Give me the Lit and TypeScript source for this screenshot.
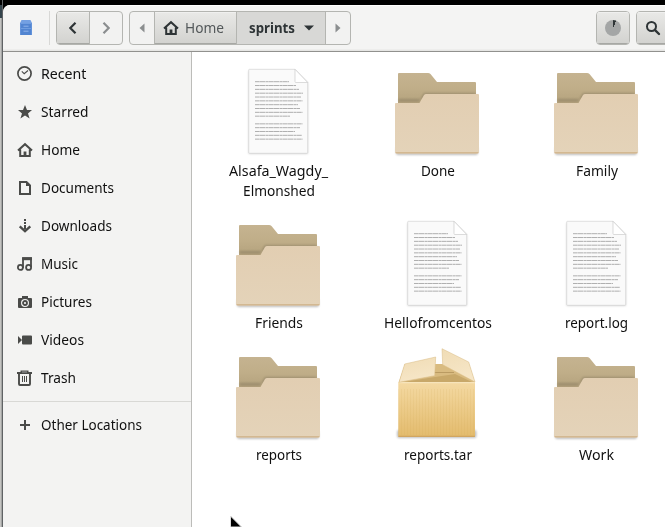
import { LitElement, html, css, svg } from "lit";
import { customElement, property } from "lit/decorators.js";

// Text label condensed horizontally so that it fills a given width.
@customElement("fit-label")
class FitLabel extends LitElement {
  @property() text = "";
  @property({ type: Number }) fit = 0;
  static styles = css`
    :host { display: block; white-space: nowrap; }
    span { display: inline-block; transform-origin: 0 50%; }
  `;
  updated() {
    const s = this.renderRoot.querySelector("span") as HTMLElement;
    s.style.transform = "none";
    const k = this.fit / s.getBoundingClientRect().width;
    s.style.transform = `scaleX(${k.toFixed(4)})`;
    this.style.width = this.fit + "px";
  }
  render() { return html`<span>${this.text}</span>`; }
}

const house = svg`<path d="M1 8.4 8 2.2 15 8.4M3.2 7.5V14H12.8V7.5" fill="none" stroke="currentColor" stroke-width="2"/><path d="M6.6 14V9.5H9.4V14Z" fill="currentColor"/>`;

const glyphs: Record<string, unknown> = {
  recent: svg`<circle cx="7.5" cy="7.5" r="6.6" fill="none" stroke="currentColor" stroke-width="1.7"/><path d="M4.8 5.4 7.2 7.7 11 4.5" fill="none" stroke="currentColor" stroke-width="1.1"/>`,
  star: svg`<path d="M8 1 10 6H15L11 9.4 12.6 14.6 8 11.5 3.4 14.6 5 9.4 1 6H6Z" fill="currentColor"/>`,
  home: house,
  doc: svg`<path d="M3 2H9.5L13 5.5V14H3Z" fill="none" stroke="currentColor" stroke-width="2"/><path d="M9 2V6H13Z" fill="currentColor"/>`,
  down: svg`<path d="M7 1H9V3H7ZM7 4H9V6H7ZM7 7H9V11H7Z" fill="currentColor"/><path d="M2.7 8.3 8 13.2 13.3 8.3" fill="none" stroke="currentColor" stroke-width="2.3"/>`,
  music: svg`<path d="M6 12V2.2H14V11" fill="none" stroke="currentColor" stroke-width="1.8"/><path d="M5.2 1.3H15V4.2H5.2Z" fill="currentColor"/><circle cx="3.4" cy="11.4" r="2.5" fill="none" stroke="currentColor" stroke-width="1.8"/><circle cx="11.6" cy="11.4" r="2.5" fill="none" stroke="currentColor" stroke-width="1.8"/>`,
  camera: svg`<path fill-rule="evenodd" d="M5 2H11V4H14Q15 4 15 5V13Q15 14 14 14H2Q1 14 1 13V5Q1 4 2 4H5ZM8 5A4 4 0 1 0 8 13A4 4 0 1 0 8 5Z" fill="currentColor"/><circle cx="8" cy="9" r="2" fill="none" stroke="currentColor" stroke-width="1.8"/>`,
  video: svg`<path d="M1 4 5 8 1 12ZM5 4.5Q5 3.5 6 3.5H14Q15 3.5 15 4.5V11.5Q15 12.5 14 12.5H6Q5 12.5 5 11.5Z" fill="currentColor"/>`,
  trash: svg`<path d="M0 2H3.5V0.5H11.5V2H15V4H0ZM5 1.7V2.2H10V1.7Z" fill="currentColor"/><path d="M2 4V14Q2 15 3 15H12Q13 15 13 14V4" fill="none" stroke="currentColor" stroke-width="1.9"/><path d="M5.5 6V12M7.5 6V12M9.5 6V12" stroke="currentColor"/>`,
  plus: svg`<path d="M8 3V13M3 8H13" stroke="currentColor" stroke-width="2"/>`,
};

const places: [string, string, number][] = [
  ["recent", "Recent", 45.5], ["star", "Starred", 47.5], ["home", "Home", 39],
  ["doc", "Documents", 73], ["down", "Downloads", 71], ["music", "Music", 37],
  ["camera", "Pictures", 51], ["video", "Videos", 43], ["trash", "Trash", 35],
];

const lineEnds = [59, 66, 69, 73, 71, 72.5, 68, 70, 72.5, 60, 0, 72.5, 70, 65, 72, 72.5];

const art: Record<string, unknown> = {
  folder: svg`
    <defs>
      <linearGradient id="b" gradientUnits="userSpaceOnUse" x1="0" y1="10" x2="0" y2="40"><stop offset="0" stop-color="#c5b390"/><stop offset=".5" stop-color="#c0ae89"/><stop offset="1" stop-color="#b4a27d"/></linearGradient>
      <linearGradient id="f" x1="0" y1="0" x2="0" y2="1"><stop offset="0" stop-color="#e2ceb2"/><stop offset="1" stop-color="#e4d3b9"/></linearGradient>
    </defs>
    <rect class="shadow" x="7" y="84" width="82" height="8" rx="2"/>
    <path d="M9 11Q9 10 10 10H39Q40.500 10 41.500 11L48 19H86Q87 19 87 20V60H9Z" fill="url(#b)"/>
    <path class="shadow thin" d="M9.500 38.500H30L35 30H86.500V36H9.500Z"/>
    <path d="M6 41Q6 40 7 40H30.500L35 32Q35.800 31 37 31H89Q90 31 90 32V89Q90 90.500 88.500 90.500H7.500Q6 90.500 6 89Z" fill="url(#f)"/>
    <path d="M6.500 89H89.500Q89.500 90.500 88 90.500H8Q6.500 90.500 6.500 89Z" fill="#d3b891"/>`,
  text: svg`
    <path class="shadow thin" d="M18.500 8H65L78 20V91H18.500Z"/>
    <path d="M18.700 7Q18.700 6.300 19.500 6.300H65L77.700 19.500V89.500Q77.700 90.300 77 90.300H19.500Q18.700 90.300 18.700 89.500Z" fill="#fafafa" stroke="#ccc" stroke-width=".6"/>
    <path d="M65 6.300 77.700 19.500H65.800Q65 19.500 65 18.700Z" fill="#fff" stroke="#c4c4c4" stroke-width=".6"/>
    ${lineEnds.map((e, i) => e ? svg`<path d=${`M25 ${18.7 + i * 3.83}H${e}`} stroke="#a6a6a6" stroke-width=".9" stroke-dasharray="4 .3 6 .4 3 .3"/>` : "")}`,
  box: svg`
    <defs>
      <linearGradient id="x" x1="0" y1="0" x2="0" y2="1"><stop offset="0" stop-color="#f4d9a2"/><stop offset="1" stop-color="#e3bb6d"/></linearGradient>
      <linearGradient id="l" x1="0" y1="0" x2=".3" y2="1"><stop offset="0" stop-color="#f0dcb5"/><stop offset="1" stop-color="#f6e6c7"/></linearGradient>
      <pattern id="p" width="3" height="9" patternUnits="userSpaceOnUse"><path d="M.5 0V9" stroke="#c99b4a" stroke-opacity=".1"/></pattern>
    </defs>
    <rect class="shadow" x="8" y="83" width="79.500" height="8" rx="2"/>
    <path d="M16 17H80L86 36H9.500Z" fill="#d9bb80"/>
    <path d="M43 25.500H65" stroke="#b2935a" stroke-width=".8" fill="none"/>
    <path d="M11 35.500 46 30 66 27 84 35.500Z" fill="#c8a869"/>
    <path d="M9.300 35.300H86V88.500Q86 89.700 84.800 89.700H10.500Q9.300 89.700 9.300 88.500Z" fill="url(#x)"/>
    <path d="M9.300 42H86V88H9.300Z" fill="url(#p)"/>
    <path d="M9.300 35.700H86" stroke="#fae9c4"/>
    <path d="M9.300 89.300H86" stroke="#c9984c" stroke-width=".8"/>
    <path d="M15.700 17 46.700 10 45.700 28.700 10 35.300Z" fill="url(#l)" stroke="#d9bb83" stroke-width=".5"/>
    <path d="M53 1.700 79.700 15 86 35 53.700 17.700Z" fill="url(#l)" stroke="#d9bb83" stroke-width=".5"/>`,
};

const files: [string, [string, number][]][] = [
  ["text", [["Alsafa_Wagdy_", 99], ["Elmonshed", 72]]],
  ["folder", [["Done", 34]]], ["folder", [["Family", 42]]],
  ["folder", [["Friends", 48]]], ["text", [["Hellofromcentos", 108]]], ["text", [["report.log", 63]]],
  ["folder", [["reports", 46]]], ["box", [["reports.tar", 68]]], ["folder", [["Work", 35]]],
];

@customElement("app-root")
class AppRoot extends LitElement {
  static styles = css`
    * { box-sizing: border-box; }
    :host { display: flex; position: relative; width: 665px; height: 527px; overflow: hidden; font: 14.3px/20px "Noto Sans", sans-serif; color: #101010; background: linear-gradient(#000 0 15px, #9c9d9c 15px); }
    svg { display: block; flex: none; }
    .edge { width: 3px; flex: none; background: linear-gradient(90deg, #c4c4c2 0 1px, #a5a6a5 1px 2px, #606365 2px); }
    .edge::before { content: ""; display: block; width: 2px; height: 18px; background: linear-gradient(#000 0 5px, #34444c 5px); }
    .window { flex: 1; min-width: 0; margin-top: 5px; display: flex; flex-direction: column; background: #fff; border-radius: 7px 0 0 0; overflow: hidden; }
    .bar { height: 47px; flex: none; display: flex; align-items: flex-start; padding-top: 6px; background: linear-gradient(#fff 0 1px, #f4f4f3 1px 44px, #e6e6e4 45px); border-bottom: 1px solid #91918e; }
    .bar > * { flex: none; }
    .app { margin: 9px 0 0 17px; width: 12px; }
    .rule { width: 1px; height: 34px; background: #d8d8d6; margin: 0 6px 0 17px; }
    .group { display: flex; height: 34px; border: 1px solid #b4b5b1; border-radius: 4px; overflow: hidden; background: #f2f2f1; }
    .cell { flex: none; display: flex; align-items: center; justify-content: center; border-right: 1px solid #b4b5b1; }
    .cell:last-child { border: 0; }
    .up { background: linear-gradient(#e9e9e7, #d2d2cf); box-shadow: inset 0 1px #f0f0ef, inset 0 -1px #a7a8a4; }
    .w33 { width: 33px; } .w32 { width: 32px; } .w25 { width: 25px; } .w24 { width: 24px; }
    .home { width: 82px; justify-content: flex-start; padding-left: 8px; gap: 6px; color: #53585a; }
    .home svg { color: #2e3436; }
    .here { width: 89px; background: #d8d8d6; justify-content: flex-start; padding-left: 12px; gap: 8px; font-weight: 700; color: #2e3436; }
    .path { margin-left: 6px; }
    .view { margin-left: 245px; width: 34px; }
    .find { margin-left: 6px; width: 34px; }
    .view .cell, .find .cell { width: 32px; }
    .pie { width: 16px; height: 16px; border-radius: 50%; background: conic-gradient(#2e3436 0 24deg, #a4a6a6 24deg); }
    .main { flex: 1; display: flex; min-height: 0; }
    .side { width: 189px; flex: none; padding-top: 3px; background: #f3f3f2; border-right: 1px solid #bcbcb9; }
    .place { height: 38px; display: flex; align-items: center; gap: 8px; padding-left: 14px; }
    .place svg { color: #4a4b49; }
    .split { height: 1px; background: #d8d8d5; margin: 4px 0; }
    .files { flex: 1; padding: 11px 0 0 6.500px; display: grid; grid-template-columns: repeat(3, 159px); align-content: start; row-gap: 14px; }
    .file { display: flex; flex-direction: column; align-items: center; }
    .file > svg { margin-bottom: 2px; }
    .file fit-label { margin-left: 1px; }
    .shadow { fill: #000; opacity: .25; filter: blur(1px); }
    .thin { opacity: .15; filter: blur(.8px); }
    .pointer { position: absolute; left: 230px; top: 516px; }
  `;
  icon(name: string) { return html`<svg width="16" height="16" viewBox="0 0 16 16">${glyphs[name]}</svg>`; }
  render() {
    return html`
      <div class="edge"></div>
      <div class="window">
        <div class="bar">
          <svg class="app" width="12" height="16" viewBox="0 0 12 16"><path d="M1.500 0H10.500L12 3V15H0V3Z" fill="#74a0e2"/><path d="M.5 3H11.500V15H.5Z" fill="#5285d1"/><path d="M1 3.500H11M1 8.500H11" stroke="#6f9de0"/><path d="M3.500 6.200H8.500M3.500 11.200H8.500" stroke="#8fb3ea"/></svg>
          <div class="rule"></div>
          <div class="group">
            <div class="cell up w33"><svg width="16" height="16" viewBox="0 0 16 16"><path d="M10.500 2.700 5.300 8 10.500 13.300" fill="none" stroke="#2e3436" stroke-width="2.200"/></svg></div>
            <div class="cell w32"><svg width="16" height="16" viewBox="0 0 16 16"><path d="M5.500 2.700 10.700 8 5.500 13.300" fill="none" stroke="#8b8e8f" stroke-width="2.200"/></svg></div>
          </div>
          <div class="group path">
            <div class="cell w25"><svg width="16" height="16" viewBox="0 0 16 16"><path d="M10.500 3.500V12.500L5.500 8Z" fill="#8b8e8f"/></svg></div>
            <div class="cell up home">${this.icon("home")}<fit-label text="Home" fit="39"></fit-label></div>
            <div class="cell here"><fit-label text="sprints" fit="46"></fit-label><svg width="12" height="8" viewBox="0 0 12 8"><path d="M1 1.500H11L6 6.500Z" fill="#2e3436"/></svg></div>
            <div class="cell w24"><svg width="16" height="16" viewBox="0 0 16 16"><path d="M5.500 3.500V12.500L10.500 8Z" fill="#8b8e8f"/></svg></div>
          </div>
          <div class="group view"><div class="cell up"><div class="pie"></div></div></div>
          <div class="group find"><div class="cell up"><svg width="16" height="16" viewBox="0 0 16 16"><circle cx="6.500" cy="6.500" r="4.500" fill="none" stroke="#2e3436" stroke-width="2"/><path d="M9.800 9.800 14 14" stroke="#2e3436" stroke-width="2.400" stroke-linecap="round"/></svg></div></div>
        </div>
        <div class="main">
          <div class="side">
            ${places.map(([g, t, w]) => html`<div class="place">${this.icon(g)}<fit-label .text=${t} .fit=${w}></fit-label></div>`)}
            <div class="split"></div>
            <div class="place">${this.icon("plus")}<fit-label text="Other Locations" fit="101"></fit-label></div>
          </div>
          <div class="files">
            ${files.map(([a, lines]) => html`<div class="file"><svg width="96" height="96" viewBox="0 0 96 96">${art[a]}</svg>${lines.map(([t, w]) => html`<fit-label .text=${t} .fit=${w}></fit-label>`)}</div>`)}
          </div>
        </div>
      </div>
      <svg class="pointer" width="12" height="11" viewBox="0 0 12 11"><path d="M.5 0V11H11.500Z" fill="#000" stroke="#ddd" stroke-width="1"/></svg>
    `;
  }
}
